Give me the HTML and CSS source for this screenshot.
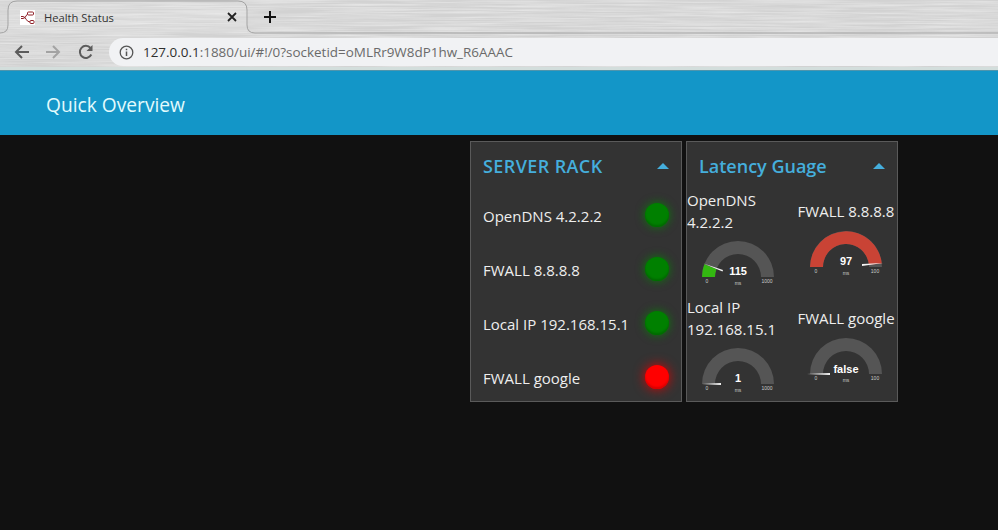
FILE: index.html
```html
<!DOCTYPE html>
<html lang="en">
<head>
    <meta charset="UTF-8">
    <meta name="viewport" content="width=device-width, initial-scale=1.0">
    <title>Health Status</title>
    <link rel="stylesheet" href="styles.css">
</head>
<body>

    <!-- browser frame -->
    <div class="chrome">
        <svg class="brushed" width="998" height="71" aria-hidden="true">
            <filter id="brush">
                <feTurbulence type="fractalNoise" baseFrequency="0.012 0.65" numOctaves="3" seed="4"/>
                <feColorMatrix type="matrix" values="0 0 0 0 1  0 0 0 0 1  0 0 0 0 1  0.8 0 0 0 -0.25"/>
            </filter>
            <rect width="998" height="71" filter="url(#brush)"/>
            <path d="M8 33V10Q8 1 17 1H238Q247 1 247 10V33Z" fill="#fff" fill-opacity="0.12"/>
            <path d="M0 33Q8 33 8 25V10Q8 1 17 1H238Q247 1 247 10V25Q247 33 255 33H998" fill="none" stroke="#a3a3a3"/>
            <rect y="67" width="998" height="3" fill="#d3dedc"/>
            <rect y="70" width="998" height="1" fill="#4f95ad"/>
        </svg>

        <div class="tabstrip">
            <div class="tab">
                <svg class="favicon" width="15" height="15" viewBox="0 0 15 15">
                    <rect width="15" height="15" fill="#fff"/>
                    <path d="M1 8.500h2c3 0 3-5 6-5M1 6.500h2c3 0 3 5.500 7 5.500" fill="none" stroke="#8f1f27" stroke-width="1"/>
                    <rect x="7.500" y="2" width="6" height="3" rx="1" fill="#fff" stroke="#8f1f27" stroke-width="1"/>
                    <rect x="10" y="10.500" width="4" height="3" rx="1" fill="#fff" stroke="#8f1f27" stroke-width="1"/>
                </svg>
                <span class="tab-title">Health Status</span>
                <svg class="tab-close" width="10" height="10" viewBox="0 0 10 10">
                    <path d="M1 1l8 8M9 1l-8 8" stroke="#222" stroke-width="1.800"/>
                </svg>
            </div>
            <svg class="new-tab" width="12" height="12" viewBox="0 0 12 12">
                <path d="M6 0v12M0 6h12" stroke="#111" stroke-width="2"/>
            </svg>
        </div>

        <div class="toolbar">
            <svg class="nav-icon" width="16" height="16" viewBox="0 0 16 16">
                <path d="M15 8H2M8 2L2 8l6 6" fill="none" stroke="#5c5c5c" stroke-width="2"/>
            </svg>
            <svg class="nav-icon" width="16" height="16" viewBox="0 0 16 16">
                <path d="M1 8h13M8 2l6 6-6 6" fill="none" stroke="#a3a3a3" stroke-width="2"/>
            </svg>
            <svg class="nav-icon nav-reload" width="16" height="16" viewBox="0 0 16 16">
                <path d="M13.300 10.500A6 6 0 1 1 12.500 4" fill="none" stroke="#5c5c5c" stroke-width="2"/>
                <path d="M14.500 1v6h-6z" fill="#5c5c5c"/>
            </svg>
            <div class="address">
                <svg width="15" height="15" viewBox="0 0 15 15">
                    <circle cx="7.500" cy="7.500" r="6.300" fill="none" stroke="#555" stroke-width="1.300"/>
                    <path d="M7.500 6.500v4.500M7.500 3.800v1.500" stroke="#555" stroke-width="1.500"/>
                </svg>
                <span class="url"><span class="url-host">127.0.0.1</span>:1880/ui/#!/0?socketid=oMLRr9W8dP1hw_R6AAAC</span>
            </div>
        </div>
    </div>

    <header class="topbar">Quick Overview</header>

    <main class="content">
        <section class="card">
            <div class="card-title">
                <span class="card-title-caps">SERVER RACK</span>
                <span class="caret"></span>
            </div>
            <div class="led-row"><span class="led-name">OpenDNS 4.2.2.2</span><span class="led led-ok"></span></div>
            <div class="led-row"><span class="led-name">FWALL 8.8.8.8</span><span class="led led-ok"></span></div>
            <div class="led-row"><span class="led-name">Local IP 192.168.15.1</span><span class="led led-ok"></span></div>
            <div class="led-row"><span class="led-name">FWALL google</span><span class="led led-bad"></span></div>
        </section>

        <section class="card">
            <div class="card-title">
                <span>Latency Guage</span>
                <span class="caret"></span>
            </div>
            <div class="gauges">
                <div class="gauge-cell">
                    <div class="gauge-label">OpenDNS 4.2.2.2</div>
                    <svg class="gauge" width="102" height="63" viewBox="0 0 102 63">
                        <path class="gauge-bg" d="M15 44A36 36 0 0 1 87 44H74A23 23 0 0 0 28 44Z"/>
                        <path class="gauge-green" d="M15 44A36 36 0 0 1 17.300 31.300L29.500 35.900A23 23 0 0 0 28 44Z"/>
                        <polygon class="needle" points="16.500,30.500 36,37 35.500,38.500"/>
                        <text class="gauge-value" x="51" y="42">115</text>
                        <text class="gauge-small" x="20" y="50">0</text>
                        <text class="gauge-small" x="80" y="50">1000</text>
                        <text class="gauge-small" x="51" y="52">ms</text>
                    </svg>
                </div>
                <div class="gauge-cell gauge-cell-right">
                    <div class="gauge-label">FWALL 8.8.8.8</div>
                    <svg class="gauge" width="102" height="63" viewBox="0 0 102 63">
                        <path class="gauge-bg" d="M15 44A36 36 0 0 1 87 44H74A23 23 0 0 0 28 44Z"/>
                        <path class="gauge-red" d="M15 44A36 36 0 0 1 86.800 40.600L73.900 41.800A23 23 0 0 0 28 44Z"/>
                        <polygon class="needle" points="67,41 88,40 67,43"/>
                        <text class="gauge-value" x="51" y="42">97</text>
                        <text class="gauge-small" x="21" y="50">0</text>
                        <text class="gauge-small" x="80" y="50">100</text>
                        <text class="gauge-small" x="51" y="52">ms</text>
                    </svg>
                </div>
                <div class="gauge-cell">
                    <div class="gauge-label">Local IP 192.168.15.1</div>
                    <svg class="gauge" width="102" height="63" viewBox="0 0 102 63">
                        <path class="gauge-bg" d="M15 44A36 36 0 0 1 87 44H74A23 23 0 0 0 28 44Z"/>
                        <polygon class="needle" points="15,44 34,43 34,45"/>
                        <text class="gauge-value" x="51" y="42">1</text>
                        <text class="gauge-small" x="20" y="50">0</text>
                        <text class="gauge-small" x="80" y="50">1000</text>
                        <text class="gauge-small" x="51" y="52">ms</text>
                    </svg>
                </div>
                <div class="gauge-cell gauge-cell-right">
                    <div class="gauge-label">FWALL google</div>
                    <svg class="gauge" width="102" height="63" viewBox="0 0 102 63">
                        <path class="gauge-bg" d="M15 44A36 36 0 0 1 87 44H74A23 23 0 0 0 28 44Z"/>
                        <polygon class="needle" points="12,44 35,43 35,45"/>
                        <text class="gauge-value" x="51" y="43">false</text>
                        <text class="gauge-small" x="21" y="50">0</text>
                        <text class="gauge-small" x="80" y="50">100</text>
                        <text class="gauge-small" x="51" y="52">ms</text>
                    </svg>
                </div>
            </div>
        </section>
    </main>

</body>
</html>
```

FILE: styles.css
```css
html, body {
    margin: 0;
    padding: 0;
    height: 100%;
    overflow: hidden;
}

body {
    font-family: 'Open Sans', sans-serif;
    background-color: #111111;
    color: #eeeeee;
}

/* browser frame */
.chrome {
    position: relative;
    height: 70px;
    background-color: #d2d2d2;
}

.brushed {
    position: absolute;
    top: 0;
    left: 0;
}

.tabstrip {
    position: relative;
    display: flex;
    align-items: center;
    height: 33px;
    padding-left: 8px;
}

.tab {
    display: flex;
    align-items: center;
    width: 239px;
    height: 33px;
    margin-top: 1px;
    box-sizing: border-box;
    padding: 0 10px 0 12px;
}

.tab-title {
    flex: 1;
    margin-left: 9px;
    font-size: 11.200px;
    color: #333333;
}

.new-tab {
    margin-left: 17px;
    margin-top: 1px;
}

.toolbar {
    position: relative;
    display: flex;
    align-items: center;
    height: 37px;
    padding-left: 14px;
    gap: 15px;
}

.nav-reload {
    margin-left: 2px;
}

.address {
    display: flex;
    align-items: center;
    flex: 1;
    height: 28px;
    margin-top: 1px;
    padding-left: 10px;
    background-color: #f1f2f4;
    border-radius: 14px 0 0 14px;
}

.url {
    margin-left: 9px;
    font-size: 13.450px;
    color: #6a6a6a;
}

.url-host {
    color: #2e2e2e;
}

/* dashboard */
.topbar {
    height: 65px;
    box-sizing: border-box;
    padding: 0 46px;
    line-height: 70px;
    background-color: #1396c8;
    color: #e2fbfd;
    font-size: 19.200px;
}

.content {
    display: flex;
    gap: 4px;
    padding: 6px 0 0 470px;
}

.card {
    width: 212px;
    height: 261px;
    box-sizing: border-box;
    background-color: #333333;
    border: 1px solid #5a5a5a;
    overflow: hidden;
}

.card-title {
    display: flex;
    align-items: center;
    justify-content: space-between;
    height: 47px;
    padding: 1px 12px 0 12px;
    box-sizing: border-box;
    font-size: 18px;
    font-weight: 600;
    color: #45aedc;
}

.card-title-caps {
    letter-spacing: 0.4px;
}

.caret {
    width: 0;
    height: 0;
    border-left: 6px solid transparent;
    border-right: 6px solid transparent;
    border-bottom: 6px solid #45aedc;
}

.led-row {
    display: flex;
    align-items: center;
    justify-content: space-between;
    height: 54px;
    box-sizing: border-box;
    padding: 0 12px 2px;
    font-size: 15px;
}

.led-name {
    padding-top: 2px;
}

.led {
    width: 24px;
    height: 24px;
    border-radius: 50%;
}

.led-ok {
    background-color: #008000;
    box-shadow: 0 0 10px #0a7a0a, inset 0 -2px 2px #006a00;
}

.led-bad {
    background-color: #ff0000;
    box-shadow: 0 0 12px #e00000, inset 0 -2px 2px #d80000;
}

.gauges {
    display: grid;
    grid-template-columns: 102px 102px;
    column-gap: 6px;
}

.gauge-cell {
    height: 107px;
}

.gauge-label {
    display: flex;
    align-items: center;
    height: 44px;
    font-size: 15px;
    line-height: 22px;
}

.gauge-cell-right .gauge-label {
    justify-content: center;
    white-space: nowrap;
}

.gauge-cell-right .gauge {
    margin-top: -10px;
}

.gauge {
    display: block;
}

.gauge-bg {
    fill: #555555;
}

.gauge-green {
    fill: #33b811;
}

.gauge-red {
    fill: #c94335;
}

.needle {
    fill: #f4f4f4;
}

.gauge-value {
    font-family: 'Liberation Sans', sans-serif;
    font-size: 11px;
    font-weight: 700;
    fill: #ffffff;
    text-anchor: middle;
}

.gauge-small {
    font-family: 'Liberation Sans', sans-serif;
    font-size: 5px;
    fill: #cccccc;
    text-anchor: middle;
}
```
